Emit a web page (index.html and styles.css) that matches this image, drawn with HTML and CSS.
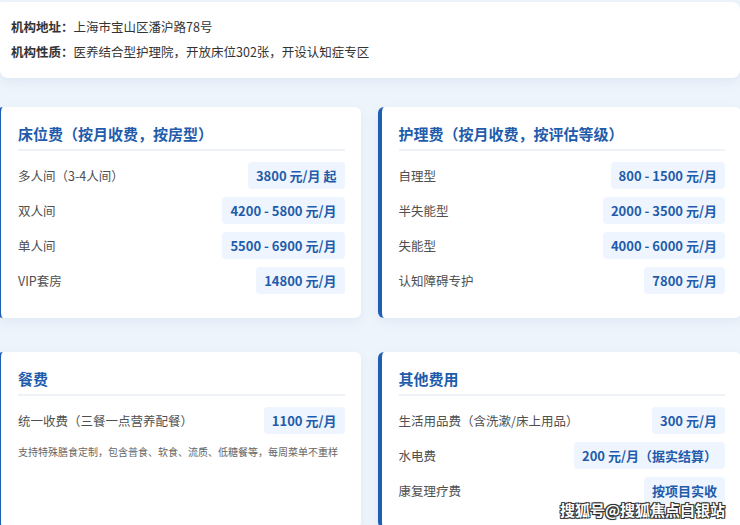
FILE: index.html
```html
<!DOCTYPE html>
<html lang="zh-CN">
<head>
<meta charset="utf-8">
<title>收费标准</title>
<link rel="stylesheet" href="styles.css">
</head>
<body>
  <section class="info">
    <p class="info-line"><b>机构地址：</b>上海市宝山区潘沪路78号</p>
    <p class="info-line"><b>机构性质：</b>医养结合型护理院，开放床位302张，开设认知症专区</p>
  </section>

  <div class="grid">
    <section class="card">
      <h2 class="card-title">床位费（按月收费，按房型）</h2>
      <div class="rows">
        <div class="row"><span class="label">多人间（3-4人间）</span><span class="price">3800 元/月 起</span></div>
        <div class="row"><span class="label">双人间</span><span class="price">4200 - 5800 元/月</span></div>
        <div class="row"><span class="label">单人间</span><span class="price">5500 - 6900 元/月</span></div>
        <div class="row"><span class="label">VIP套房</span><span class="price">14800 元/月</span></div>
      </div>
    </section>

    <section class="card">
      <h2 class="card-title">护理费（按月收费，按评估等级）</h2>
      <div class="rows">
        <div class="row"><span class="label">自理型</span><span class="price">800 - 1500 元/月</span></div>
        <div class="row"><span class="label">半失能型</span><span class="price">2000 - 3500 元/月</span></div>
        <div class="row"><span class="label">失能型</span><span class="price">4000 - 6000 元/月</span></div>
        <div class="row"><span class="label">认知障碍专护</span><span class="price">7800 元/月</span></div>
      </div>
    </section>

    <section class="card">
      <h2 class="card-title">餐费</h2>
      <div class="rows">
        <div class="row"><span class="label">统一收费（三餐一点营养配餐）</span><span class="price">1100 元/月</span></div>
      </div>
      <p class="note">支持特殊膳食定制，包含普食、软食、流质、低糖餐等，每周菜单不重样</p>
    </section>

    <section class="card">
      <h2 class="card-title">其他费用</h2>
      <div class="rows">
        <div class="row"><span class="label">生活用品费（含洗漱/床上用品）</span><span class="price">300 元/月</span></div>
        <div class="row"><span class="label">水电费</span><span class="price">200 元/月（据实结算）</span></div>
        <div class="row"><span class="label">康复理疗费</span><span class="price">按项目实收</span></div>
      </div>
    </section>
  </div>

  <div class="watermark">搜狐号@搜狐焦点白银站</div>
</body>
</html>
```

FILE: styles.css
```css
html, body {
  margin: 0;
  padding: 0;
}

body {
  background: #eef4fb;
  font-family: "Noto Sans CJK SC", "Noto Sans", sans-serif;
  color: #333;
  overflow: hidden;
  height: 525px;
  position: relative;
}

.info {
  margin-top: 2px;
  width: 740px;
  height: 76px;
  box-sizing: border-box;
  padding: 12px 11px 0;
  background: #fff;
  border-radius: 0 8px 8px 8px;
  box-shadow: 0 4px 12px rgba(40, 90, 170, 0.08);
}

.info-line {
  margin: 0;
  font-size: 12.5px;
  line-height: 25px;
  color: #333;
  white-space: nowrap;
}

.info-line b {
  font-weight: 700;
}

.grid {
  margin-top: 29px;
  margin-left: -3px;
  width: 744px;
  display: grid;
  grid-template-columns: 1fr 1fr;
  column-gap: 17px;
  row-gap: 34px;
}

.card {
  background: #fff;
  border-left: 4px solid #1e5fb4;
  border-radius: 6px;
  padding: 18px 16px 24px 17px;
  box-shadow: 0 4px 12px rgba(40, 90, 170, 0.07);
  min-width: 0;
}

.card-title {
  margin: 0 0 11px;
  font-size: 15px;
  line-height: 18px;
  font-weight: 700;
  color: #1f5cab;
  padding-bottom: 6px;
  border-bottom: 2px solid #eef1f5;
  white-space: nowrap;
}

.rows {
  display: flex;
  flex-direction: column;
  gap: 8px;
}

.row {
  display: flex;
  justify-content: space-between;
  align-items: center;
  height: 27px;
}

.label {
  font-size: 12.5px;
  color: #4f4f4f;
  white-space: nowrap;
}

.price {
  height: 27px;
  line-height: 27px;
  padding: 0 8px;
  background: #eef5fe;
  border-radius: 4px;
  font-size: 13px;
  font-weight: 700;
  color: #1f5cab;
  white-space: nowrap;
}

.note {
  margin: 12px 0 0;
  font-size: 10px;
  line-height: 12px;
  color: #666;
  white-space: nowrap;
}

.watermark {
  position: absolute;
  right: 15px;
  bottom: 5px;
  font-size: 15px;
  font-weight: 700;
  color: #fff;
  letter-spacing: 0;
  text-shadow: -1px -1px 0 #333, 1px -1px 0 #333, -1px 1px 0 #333, 1px 1px 0 #333, 0 0 2px #000;
  white-space: nowrap;
}
```
